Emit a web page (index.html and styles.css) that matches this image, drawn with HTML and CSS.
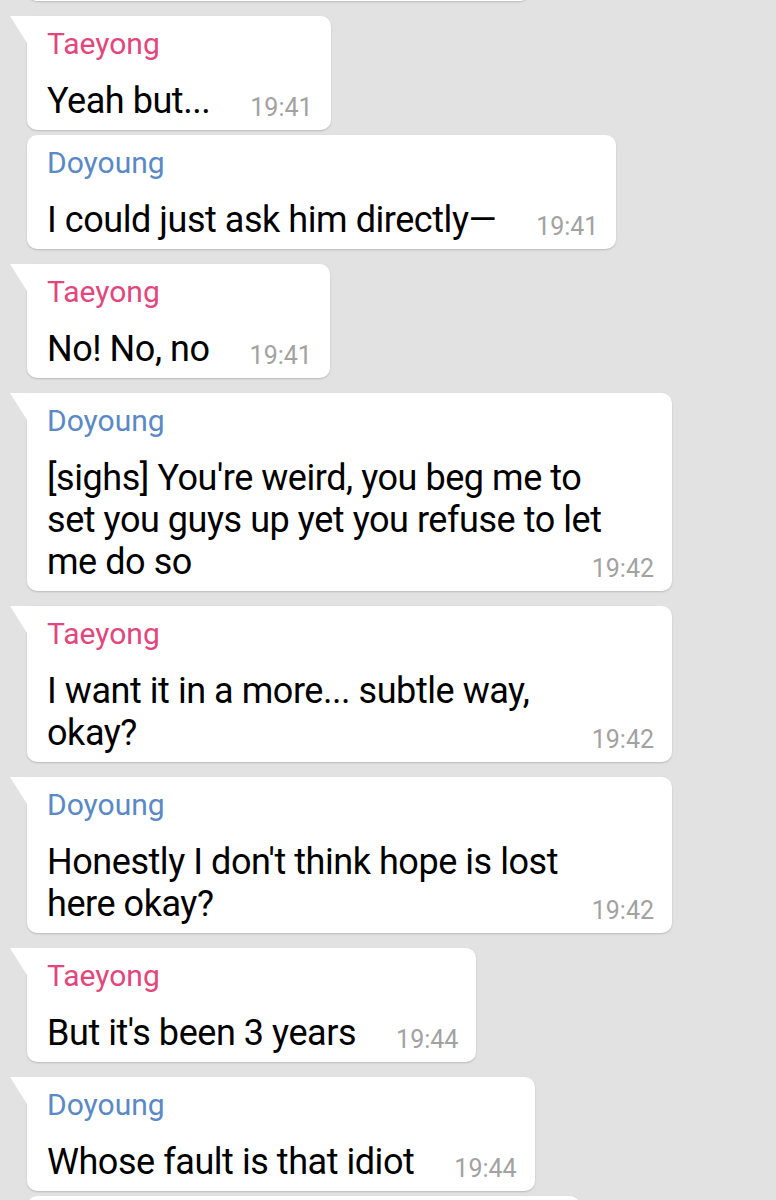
FILE: index.html
```html
<!DOCTYPE html>
<html>
<head>
    <title>Chat</title>
    <link rel="stylesheet" href="styles.css">
</head>
<body>
    <div class="chat">
        <div class="bubble cut-top"></div>

        <div class="bubble tail">
            <div class="name taeyong">Taeyong</div>
            <div class="text">Yeah but...<span class="time">19:41</span></div>
        </div>
        <div class="bubble same">
            <div class="name doyoung">Doyoung</div>
            <div class="text">I could just ask him directly—<span class="time">19:41</span></div>
        </div>

        <div class="bubble tail">
            <div class="name taeyong">Taeyong</div>
            <div class="text">No! No, no<span class="time">19:41</span></div>
        </div>

        <div class="bubble tail">
            <div class="name doyoung">Doyoung</div>
            <div class="text">[sighs] You're weird, you beg me to set you guys up yet you refuse to let me do so<span class="time">19:42</span></div>
        </div>

        <div class="bubble tail">
            <div class="name taeyong">Taeyong</div>
            <div class="text">I want it in a more... subtle way, okay?<span class="time">19:42</span></div>
        </div>

        <div class="bubble tail">
            <div class="name doyoung">Doyoung</div>
            <div class="text">Honestly I don't think hope is lost here okay?<span class="time">19:42</span></div>
        </div>

        <div class="bubble tail">
            <div class="name taeyong">Taeyong</div>
            <div class="text">But it's been 3 years<span class="time">19:44</span></div>
        </div>

        <div class="bubble tail">
            <div class="name doyoung">Doyoung</div>
            <div class="text">Whose fault is that idiot<span class="time">19:44</span></div>
        </div>
        <div class="bubble same cut-bottom"></div>
    </div>
</body>
</html>
```

FILE: styles.css
```css
body {
    margin: 0;
    background-color: #e2e2e2;
    font-family: Roboto, "Noto Sans", Arial, sans-serif;
    height: 1200px;
    overflow: hidden;
}
.chat {
    display: flex;
    flex-direction: column;
    align-items: flex-start;
    padding-left: 27px;
}
.bubble {
    position: relative;
    background: white;
    border-radius: 10px;
    box-shadow: 0px 1px 2px rgba(0, 0, 0, 0.18);
    padding: 11px 18px 8px 20px;
    max-width: 645px;
    box-sizing: border-box;
    margin-top: 15px;
}
.bubble.same {
    margin-top: 5px;
}
.bubble.tail {
    border-top-left-radius: 0;
}
.bubble.tail::before {
    content: "";
    position: absolute;
    left: -17px;
    top: 0;
    width: 17px;
    height: 27px;
    background: white;
    clip-path: polygon(0 0, 100% 0, 100% 100%);
}
.name {
    font-size: 30px;
    line-height: 34px;
    margin-bottom: 19px;
}
.taeyong {
    color: #e2467c;
}
.doyoung {
    color: #5a89c6;
}
.text {
    font-size: 36px;
    letter-spacing: -0.45px;
    line-height: 42px;
    color: #000;
    padding-right: 37px;
}
.time {
    float: right;
    font-size: 25px;
    letter-spacing: 0;
    line-height: 24px;
    color: #a2a2a2;
    margin-top: 16px;
    margin-left: 40px;
    margin-right: -37px;
}
.cut-top {
    margin-top: -113px;
    width: 503px;
    height: 114px;
}
.cut-bottom {
    width: 553px;
    height: 114px;
}
```
